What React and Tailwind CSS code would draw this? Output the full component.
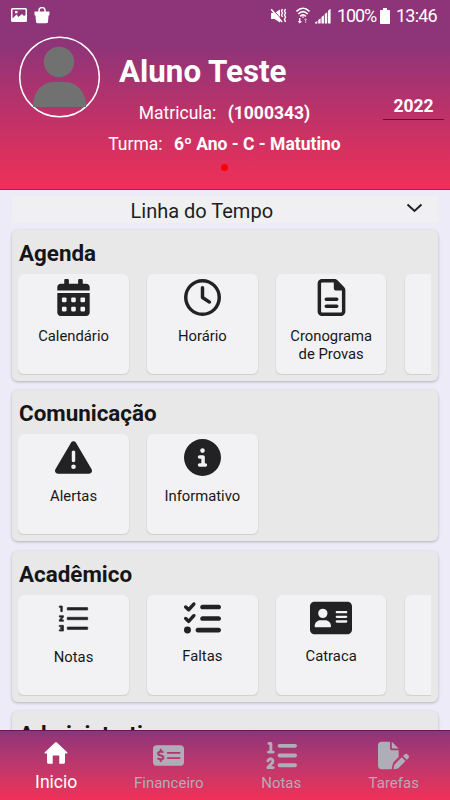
import { AiOutlineOrderedList } from "react-icons/ai";
import { FaCalendarAlt } from "react-icons/fa";
import {
  FaAddressCard,
  FaCircleInfo,
  FaFilePen,
  FaListCheck,
  FaListOl,
  FaMoneyCheckDollar,
  FaRegClock,
  FaRegFileLines,
  FaTriangleExclamation,
} from "react-icons/fa6";

const HomeIcon = ({ size, className }) => (
  <svg width={size} height={size} viewBox="0 0 24 24" fill="currentColor" className={className}>
    <path d="M11.1 1.400a1.300 1.300 0 0 1 1.800 0l10.300 9.800c.5.5.3 1.300-.5 1.300H21v8.700c0 .9-.6 1.500-1.500 1.500h-4.200v-7.200c0-.7-.4-1-1-1H9.700c-.6 0-1 .3-1 1v7.200H4.500c-.9 0-1.500-.6-1.500-1.500v-8.700H1.300c-.8 0-1-.8-.5-1.300z" />
  </svg>
);

const NotesIcon = ({ size, className }) => (
  <AiOutlineOrderedList size={size} stroke="currentColor" strokeWidth="18" className={className} />
);

const sections = [
  {
    title: "Agenda",
    items: [
      { label: "Calendário", icon: FaCalendarAlt, size: 37 },
      { label: "Horário", icon: FaRegClock, size: 37 },
      { label: "Cronograma de Provas", icon: FaRegFileLines, size: 37 },
      { label: "" },
    ],
  },
  {
    title: "Comunicação",
    items: [
      { label: "Alertas", icon: FaTriangleExclamation, size: 37 },
      { label: "Informativo", icon: FaCircleInfo, size: 37 },
    ],
  },
  {
    title: "Acadêmico",
    items: [
      { label: "Notas", icon: NotesIcon, size: 35, labelClass: "pt-px" },
      { label: "Faltas", icon: FaListCheck, size: 37 },
      { label: "Catraca", icon: FaAddressCard, size: 42 },
      { label: "" },
    ],
  },
  { title: "Administrativo", items: [{ label: "" }, { label: "" }] },
];

const tabs = [
  { label: "Inicio", icon: HomeIcon, size: 24, active: true },
  { label: "Financeiro", icon: FaMoneyCheckDollar, size: 31 },
  { label: "Notas", icon: FaListOl, size: 31 },
  { label: "Tarefas", icon: FaFilePen, size: 31 },
];

const StatusBar = () => (
  <div className="flex h-[31px] items-center justify-between pl-[11px] pr-[13px] text-white">
    <div className="flex items-center gap-[7px]">
      <svg width="16" height="15" viewBox="0 0 16 15">
        <path
          fill="currentColor"
          fillRule="evenodd"
          d="M1.500 0h13A1.500 1.500 0 0 1 16 1.500v11a1.500 1.500 0 0 1-1.500 1.500h-13A1.500 1.500 0 0 1 0 12.500v-11A1.500 1.500 0 0 1 1.500 0zM1.500 1.500v9l4-4 2 2.500 3.500-3 2 2 1.500-1V1.500zM4 3h2.500v2.300H4z"
        />
      </svg>
      <svg width="16" height="17" viewBox="0 0 16 17">
        <path d="M5 5V3.500a3 3 0 0 1 6 0V5" fill="none" stroke="currentColor" strokeWidth="1.500" />
        <path d="M.5 4.500h15v3.500l-1 .7-.5 6q-.2 1.500-1.700 1.500H3.700Q2.200 16.200 2 14.700l-.5-6-1-.7z" fill="currentColor" />
      </svg>
    </div>
    <div className="flex items-center">
      <svg width="17" height="16" viewBox="0 0 17 16" className="mr-[9px]">
        <path d="M1 5h3.500L10 1.500v13L4.500 11H1z" fill="currentColor" />
        <path d="M2.500 1 13 13" stroke="#8e3478" strokeWidth="1" />
        <path d="M1.200 1.200 12 14" stroke="currentColor" strokeWidth="1.600" />
        <path d="m12.500 1-1 2 1 2-1 2 1 2M15.500 1l-1 2 1 2-1 2 1 2-1 2.500 1 2.500" fill="none" stroke="currentColor" strokeWidth="1.400" />
      </svg>
      <svg width="14" height="17" viewBox="0 0 14 17" className="mr-[5px]">
        <g fill="none" stroke="currentColor" strokeWidth="1.600">
          <path d="M.5 4.500Q7-2 13.500 4.500M2.300 7Q7 2.300 11.700 7M4.200 9.300Q7 6.600 9.800 9.300" />
        </g>
        <path d="m7 11-1.500-1.500h3zM4.400 11v3.200h1.600L3.800 16.500 1.700 14.200h1.400V11z" fill="currentColor" />
        <path d="M9 16v-3H7.800L9.600 11l1.800 2h-1.200v3z" fill="#c79bbb" />
      </svg>
      <svg width="16" height="16" viewBox="0 0 16 16" className="mr-[6px]" fill="currentColor">
        <path d="M0 15.500v-1L2.300 13v2.500zM3.200 12l2.400-1.700v5.200H3.200zM6.500 9l2.400-1.700v8.200H6.500zM9.800 6l2.400-1.800v11.300H9.800zM13 2.800l2.600-2v14.700H13z" />
      </svg>
      <span className="w-[43px] text-[18px] leading-none tracking-[-1.1px]">100%</span>
      <svg width="10" height="16" viewBox="0 0 10 16" className="mr-[6px]" fill="currentColor">
        <path d="M3 0h4v2h2.200q.8 0 .8.8v12.400q0 .8-.8.8H.8q-.8 0-.8-.8V2.800Q0 2 .8 2H3z" />
      </svg>
      <span className="w-[41px] text-[18px] leading-none tracking-[-0.8px]">13:46</span>
    </div>
  </div>
);

const Header = () => (
  <header className="h-[190px] shrink-0 border-b border-[#e50d25] bg-[linear-gradient(to_bottom,#8e3478_0px,#8e3478_45px,#f03058_189px)] text-white">
    <StatusBar />
    <div className="flex">
      <div className="w-[100px] shrink-0 pl-[19px] pt-[5px]">
        <svg width="81" height="82" viewBox="0 0 81 82">
          <circle cx="40.500" cy="41" r="39.800" fill="none" stroke="white" strokeWidth="1.500" />
          <circle cx="40" cy="26" r="15.200" fill="#717171" />
          <path d="M14 71V69A21 23 0 0 1 34 46H47A21 23 0 0 1 67 69V71z" fill="#717171" />
        </svg>
      </div>
      <div className="flex w-[250px] flex-col items-center pr-px pt-[21px]">
        <h1 className="w-full pl-[19px] text-[31.300px] font-bold leading-[40px]">Aluno Teste</h1>
        <p className="mt-[9px] whitespace-nowrap text-[17.500px] leading-[24px]">
          Matricula: <b className="ml-[7px] font-bold">(1000343)</b>
        </p>
        <p className="mt-[7px] whitespace-nowrap text-[17.500px] leading-[24px]">
          Turma: <b className="ml-[7px] font-bold">6º Ano - C - Matutino</b>
        </p>
        <span className="mt-[8px] size-[7px] rounded-full bg-[#ff0000]" />
      </div>
      <div className="w-[100px] pl-[33px] pt-[61px]">
        <div className="h-[28px] w-[61px] border-b border-[#551638] text-center text-[17.500px] font-bold leading-[28px]">
          2022
        </div>
      </div>
    </div>
  </header>
);

const Card = ({ label, icon: Icon, size, labelClass = "" }) => (
  <div className="flex h-[100px] w-[110.300px] shrink-0 flex-col items-center rounded-[6px] bg-[#f2f2f4] pt-[5px] text-[#171719] shadow-[0_1px_2px_rgba(0,0,0,0.14)]">
    <div className="flex h-[37px] items-center">{Icon && <Icon size={size} className="text-[#222225]" />}</div>
    <span className={`mt-[10.500px] w-[100px] text-center text-[14.800px] leading-[18px] ${labelClass}`}>{label}</span>
  </div>
);

const Section = ({ title, items }) => (
  <section className="h-[151px] shrink-0 rounded-[6px] bg-[#e8e8e8] px-[7px] shadow-[0_1px_3px_rgba(0,0,0,0.25)]">
    <h2 className="h-[44px] pt-[8.800px] text-[22.400px] font-bold leading-[28px] text-[#151517]">{title}</h2>
    <div className="-ml-[0.600px] flex h-[101px] gap-[18.500px] overflow-hidden">
      {items.map((item, i) => (
        <Card key={i} {...item} />
      ))}
    </div>
  </section>
);

export default function App() {
  return (
    <div className="flex h-[800px] w-[450px] flex-col overflow-hidden bg-[#edebf7] font-[Roboto,sans-serif]">
      <Header />
      <main className="flex min-h-0 flex-1 flex-col overflow-hidden px-[12px] pt-[6px]">
        <div className="flex h-[27px] shrink-0 items-center bg-[#f0f0f2] pl-[118.500px] pr-[15px] text-[#202022]">
          <span className="pt-[2px] text-[20px] leading-[24px]">Linha do Tempo</span>
          <svg width="17" height="10" viewBox="0 0 17 10" className="mb-[3px] ml-auto" fill="none" stroke="currentColor" strokeWidth="2">
            <path d="m1.500 1.500 7 6.500 7-6.500" />
          </svg>
        </div>
        <div className="mt-[7px] flex flex-col gap-[9.400px]">
          {sections.map((section) => (
            <Section key={section.title} {...section} />
          ))}
        </div>
      </main>
      <nav className="grid h-[70px] shrink-0 grid-cols-4 border-t border-[#6c1360] bg-linear-to-b from-[#8e3478] to-[#f03058]">
        {tabs.map(({ label, icon: Icon, size, active }) => (
          <div key={label} className={`flex flex-col items-center pt-[8px] ${active ? "text-white" : "text-[#b1adb8]"}`}>
            <div className={`flex h-[32px] items-center ${active ? "pb-[4px]" : ""}`}>
              <Icon size={size} />
            </div>
            <span className={active ? "text-[17.600px] leading-[22px]" : "pt-[2px] text-[15px] leading-[20px]"}>{label}</span>
          </div>
        ))}
      </nav>
    </div>
  );
}
